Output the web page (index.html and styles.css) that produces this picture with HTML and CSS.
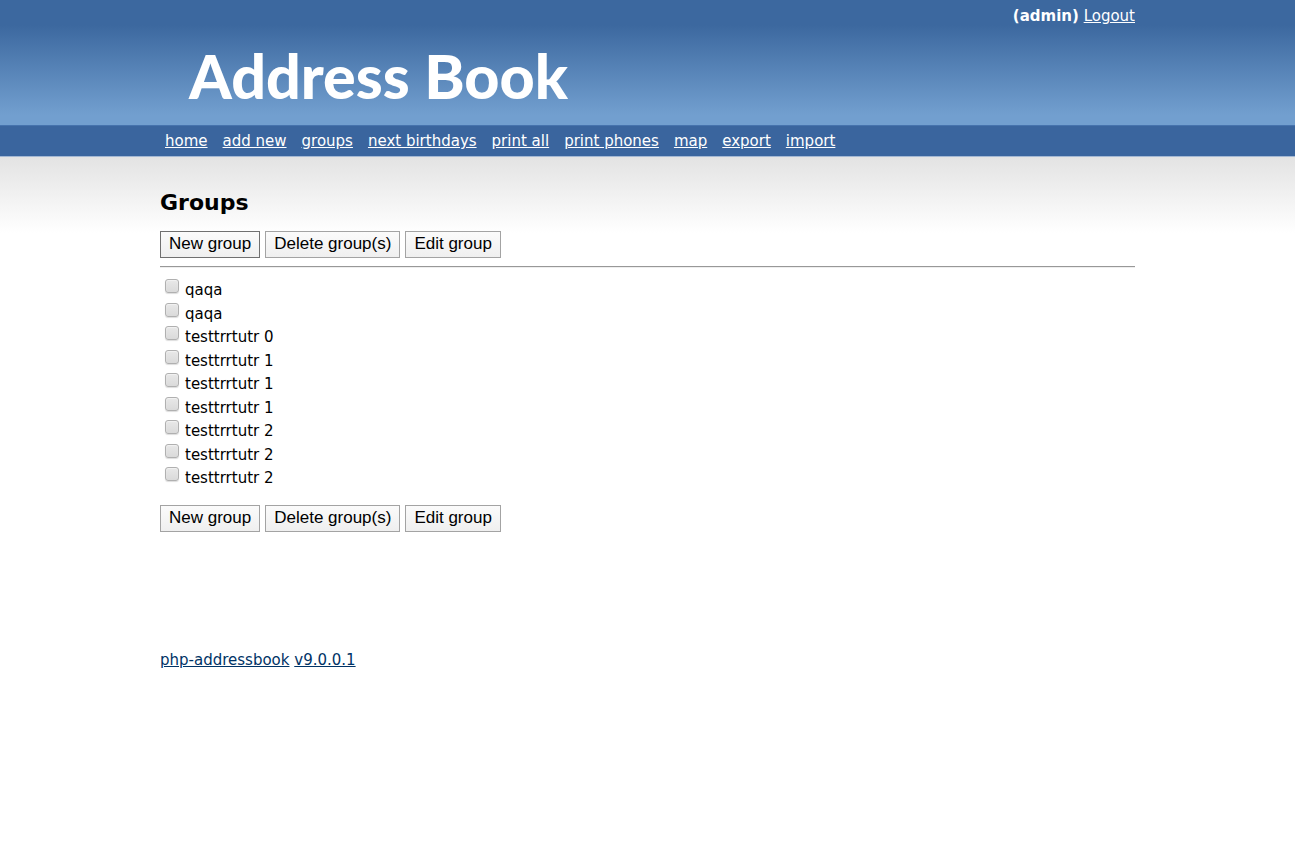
FILE: index.html
```html
<!DOCTYPE html>
<html lang="en">
<head>
<meta charset="utf-8">
<meta name="viewport" content="width=device-width, initial-scale=1">
<title>Address Book</title>
<link rel="stylesheet" href="styles.css">
</head>
<body>
<header class="top">
  <div class="wrap">
    <div class="account"><b>(admin)</b> <a href="#">Logout</a></div>
    <div class="logo">Address Book</div>
  </div>
</header>
<nav class="nav">
  <div class="wrap nav-list">
    <a href="#">home</a>
    <a href="#">add new</a>
    <a href="#">groups</a>
    <a href="#">next birthdays</a>
    <a href="#">print all</a>
    <a href="#">print phones</a>
    <a href="#">map</a>
    <a href="#">export</a>
    <a href="#">import</a>
  </div>
</nav>
<main class="main">
  <form class="wrap">
    <h1 class="title">Groups</h1>
    <div class="actions">
      <button class="btn btn-default" type="button">New group</button>
      <button class="btn" type="button">Delete group(s)</button>
      <button class="btn" type="button">Edit group</button>
    </div>
    <hr class="rule">
    <div class="groups">
      <label class="group"><input class="check" type="checkbox">qaqa</label>
      <label class="group"><input class="check" type="checkbox">qaqa</label>
      <label class="group"><input class="check" type="checkbox">testtrrtutr 0</label>
      <label class="group"><input class="check" type="checkbox">testtrrtutr 1</label>
      <label class="group"><input class="check" type="checkbox">testtrrtutr 1</label>
      <label class="group"><input class="check" type="checkbox">testtrrtutr 1</label>
      <label class="group"><input class="check" type="checkbox">testtrrtutr 2</label>
      <label class="group"><input class="check" type="checkbox">testtrrtutr 2</label>
      <label class="group"><input class="check" type="checkbox">testtrrtutr 2</label>
    </div>
    <div class="actions">
      <button class="btn" type="button">New group</button>
      <button class="btn" type="button">Delete group(s)</button>
      <button class="btn" type="button">Edit group</button>
    </div>
  </form>
</main>
<footer class="wrap footer"><a href="#">php-addressbook</a> <a href="#">v9.0.0.1</a></footer>
</body>
</html>
```
FILE: styles.css
```css
* { box-sizing: border-box; }
body {
  margin: 0;
  background: #fff;
  color: #000;
  font: 15px/20px Verdana, "DejaVu Sans", sans-serif;
}
.wrap { max-width: 975px; margin: 0 auto; }
.top {
  color: #fff;
  background: linear-gradient(#3c689f 0, #3c689f 20%, #729fcf 92%, #729fcf 100%);
}
.top a, .nav a { color: #fff; }
.account { padding-top: 6px; text-align: right; }
.logo {
  padding: 10px 0 9px 29px;
  font: 900 61px/80px Lato, sans-serif;
}
.nav {
  background: #3a659e;
  border-top: 1px solid #4673ad;
  border-bottom: 1px solid #a3b8d4;
}
.nav-list {
  display: flex;
  flex-wrap: wrap;
  column-gap: 15px;
  padding: 5px;
}
.main {
  padding-top: 32px;
  background: linear-gradient(#e3e3e3 0, #fff 76px);
}
.title { margin: 0 0 14px; font-size: 22px; line-height: 28px; }
.actions { display: flex; flex-wrap: wrap; gap: 5px; }
.btn {
  padding: 0 8px 2px;
  border: 1px solid #a3a3a3;
  border-radius: 0;
  background: linear-gradient(#fbfbfb, #efefef);
  color: #000;
  font: 17px/23px Arial, "Liberation Sans", sans-serif;
}
.btn-default { border-color: #707070; }
.rule {
  margin: 8px 0 11px;
  border: 0;
  border-top: 1px solid #989898;
  border-bottom: 1px solid #eee;
}
.groups {
  display: grid;
  grid-auto-rows: 24px 23px;
  padding-left: 5px;
  margin-bottom: 14px;
  justify-items: start;
}
.group { display: flex; gap: 6px; align-items: flex-start; line-height: 22px; }
.check {
  appearance: none;
  width: 14px;
  height: 14px;
  margin: 0;
  border: 1px solid #b0b0b0;
  border-radius: 3px;
  background: linear-gradient(#e8e8e8, #dadada);
  box-shadow: inset 0 1px 1px #f2f2f2, 0 1px 1px #ddd;
}
.check:checked { background: #3a659e; }
.footer { margin-top: 118px; }
.footer a { color: #036; }
```
